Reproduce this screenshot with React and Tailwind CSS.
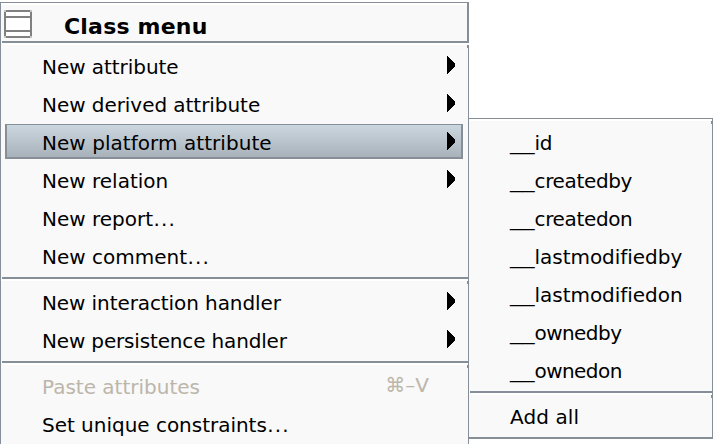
const mainGroups = [
  [
    { label: 'New attribute', submenu: true, fit: 'tracking-[-0.05px]' },
    { label: 'New derived attribute', submenu: true, fit: 'tracking-[-0.05px]' },
    { label: 'New platform attribute', submenu: true, active: true, fit: 'tracking-[0.05px]' },
    { label: 'New relation', submenu: true, fit: 'tracking-[0px]' },
    { label: 'New report', dots: true, fit: 'tracking-[0px]' },
    { label: 'New comment', dots: true, fit: 'tracking-[0px]' }
  ],
  [
    { label: 'New interaction handler', submenu: true, fit: 'tracking-[-0.09px]' },
    { label: 'New persistence handler', submenu: true, fit: 'tracking-[-0.16px]' }
  ],
  [
    { label: 'Paste attributes', shortcut: '⌘–V', disabled: true, fit: 'tracking-[0px]' },
    { label: 'Set unique constraints', dots: true, fit: 'tracking-[-0.02px]' }
  ]
];

const platformGroups = [
  [
    { prefix: '__', label: 'id', fit: 'tracking-[-0.2px]' },
    { prefix: '__', label: 'createdby', fit: 'tracking-[-0.35px]' },
    { prefix: '__', label: 'createdon', fit: 'tracking-[-0.35px]' },
    { prefix: '__', label: 'lastmodifiedby', fit: 'tracking-[-0.03px]' },
    { prefix: '__', label: 'lastmodifiedon', fit: 'tracking-[-0.03px]' },
    { prefix: '__', label: 'ownedby', fit: 'tracking-[-0.55px]' },
    { prefix: '__', label: 'ownedon', fit: 'tracking-[-0.55px]' }
  ],
  [{ label: 'Add all', fit: 'tracking-[0.1px]' }]
];

function Arrow() {
  return (
    <svg className="w-2 h-[18px] shrink-0" viewBox="0 0 8 18" shapeRendering="crispEdges">
      <path d="M0 0L8 7.5V10.5L0 18Z" fill="#000" />
    </svg>
  );
}

function ClassIcon() {
  return (
    <svg className="w-7 h-7" viewBox="0 0 28 28" shapeRendering="crispEdges">
      <rect width="28" height="28" fill="#c4c4c4" />
      <rect x="2" width="24" height="28" fill="#808080" />
      <rect y="2" width="28" height="24" fill="#808080" />
      <path d="M2 2h24v4H2zM2 8h24v12H2zM2 22h24v4H2z" fill="#fff" />
    </svg>
  );
}

function MenuItem({ item }) {
  return (
    <div className="h-[38px] pl-1 pr-[5px]">
      <div
        className={`flex h-[35px] items-start justify-between border-t border-l-2 border-r-2 border-b-2 pl-[35px] ${
          item.active
            ? 'border-[#868f98] bg-linear-to-b from-[#cbd7df] to-[#a9b2bb]'
            : 'border-transparent'
        } ${item.disabled ? 'text-[#bcb6aa]' : 'text-black'}`}
      >
        <span className={`flex leading-[36px] whitespace-pre ${item.fit}`}>
          {item.prefix && (
            <span className="w-[24.5px] tracking-normal">
              <span className="inline-block origin-left scale-x-[1.23]">{item.prefix}</span>
            </span>
          )}
          {item.label}
          {item.dots && <span className="ml-[0.5px] tracking-[1.1px]">...</span>}
        </span>
        {item.submenu && (
          <span className="mt-[7px] mr-[6px]">
            <Arrow />
          </span>
        )}
        {item.shortcut && <span className="mr-8 leading-[32px]">{item.shortcut}</span>}
      </div>
    </div>
  );
}

function MenuGroup({ items, last }) {
  return (
    <div className="relative border-t-2 border-white pt-[3px]">
      {/* Bevel at the right edge */}
      <div className="absolute top-0 right-0 h-[3px] w-px bg-[#868f98]" />
      {items.map((item) => (
        <MenuItem key={item.prefix ? item.prefix + item.label : item.label} item={item} />
      ))}
      <div className={`ml-px border-[#868f98] pt-px ${last ? '' : 'border-b-2'}`} />
    </div>
  );
}

export default function App() {
  return (
    <div
      className="relative h-[444px] w-[718px] overflow-hidden bg-white pt-[2px] text-[20px]"
      style={{ fontFamily: '"DejaVu Sans", Verdana, sans-serif' }}
    >
      {/* Class menu */}
      <div className="w-[469px] border-t border-l border-r border-[#868f98] bg-[#f9f9f9]">
        <div className="relative border-r border-[#868f98]">
          <div className="flex h-[38px] items-start border-t-2 border-white pl-[3px]">
            <div className="mt-[5px]">
              <ClassIcon />
            </div>
            <h1 className="ml-[32px] text-[22px] leading-[44px] font-bold tracking-[0.2px] whitespace-pre">
              Class menu
            </h1>
          </div>
          <div className="ml-px h-[2px] bg-[#868f98]" />
          <div className="absolute top-full -right-[2px] h-[2px] w-px bg-white" />
        </div>
        {mainGroups.map((items, i) => (
          <MenuGroup key={i} items={items} last={i === mainGroups.length - 1} />
        ))}
      </div>

      {/* Platform attribute submenu, opened over the parent's right border */}
      <div className="absolute top-[118px] left-[468px] w-[245px] border-t border-r border-b-2 border-l border-[#868f98] bg-[#f9f9f9]">
        {platformGroups.map((items, i) => (
          <MenuGroup key={i} items={items} last={i === platformGroups.length - 1} />
        ))}
      </div>
    </div>
  );
}
